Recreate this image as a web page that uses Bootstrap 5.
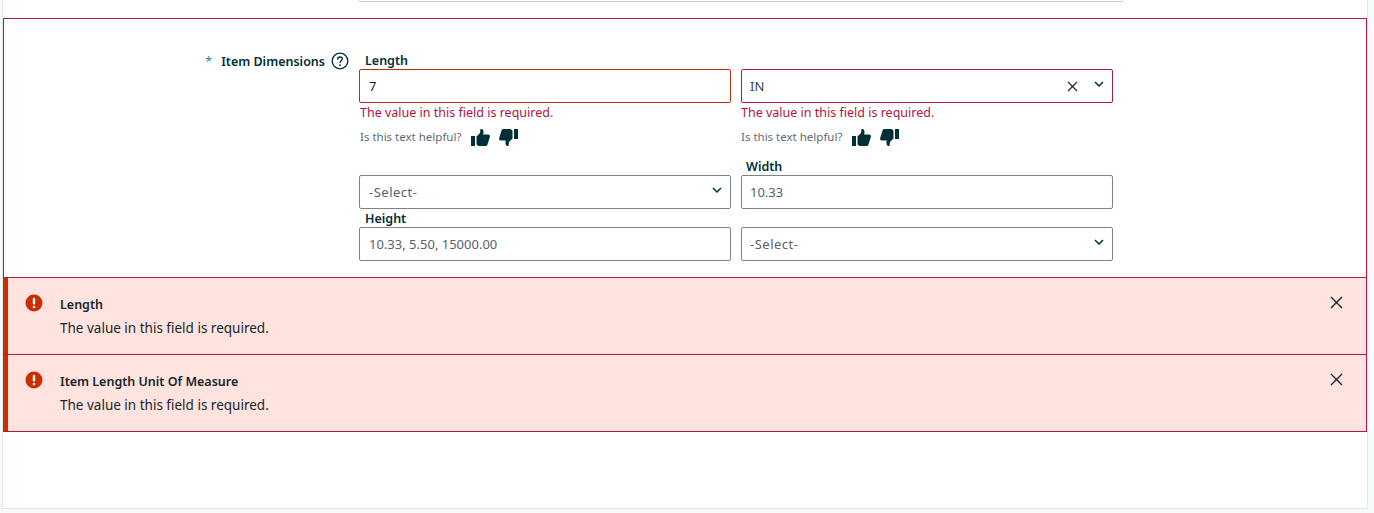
<!DOCTYPE html>
<html lang="en">
<head>
<meta charset="utf-8">
<title>Item Dimensions</title>
<link rel="stylesheet" href="https://cdn.jsdelivr.net/npm/bootstrap@5.3.0/dist/css/bootstrap.min.css">
<style>
html,body{height:513px;overflow:hidden}
body{background:#f7fafa;font-family:"Noto Sans","Open Sans",sans-serif;color:#002f36;font-size:13px}
.frame{margin-left:2px;width:1366px;height:509px;background:#fff;border:1px solid #e3e6e6;border-top:0}
.top-stub{margin-left:356px;width:764px;height:2px;border:1px solid #c9cccc;border-top:0;border-radius:0 0 2px 2px}
.err-section{margin-top:16px;border:1px solid #ad1a46;height:260px;padding-top:34px}
.field-row{display:flex}
.label-col{width:355px;flex:none;display:flex;justify-content:flex-end;align-items:flex-start;gap:6px;padding-right:10px;font-weight:600;font-size:12.5px;line-height:16px}
.label-col .req,.label-col .lbl-text{margin-top:1px}
.label-col .req{color:#1b8a9a;margin-right:3px;font-weight:400}
.inputs-col{width:754px;flex:none;display:grid;grid-template-columns:372px 372px;column-gap:10px;row-gap:2px}
.fld-label{display:block;font-weight:600;font-size:12.5px;line-height:16px;padding-left:6px;margin:0;height:16px}
.second .fld-label{padding-left:5px}
.fld{height:34px;border:1px solid #7b8585;border-radius:2px;font-size:13px;padding:0 9px;color:#56636a;background:#fff;display:flex;align-items:center;width:100%;line-height:1}
.second .fld{padding-left:8px}
.fld:focus{box-shadow:none}
.fld.dark{color:#16191f}
.fld.bad-o{border-color:#b62f10}
.fld.bad-c{border-color:#ad1a46;color:#3a464c}
.fld.placeholder-like{letter-spacing:.5px}
.fld .tools{margin-left:auto;display:flex;align-items:center;gap:16px;margin-right:-1px}
.err-msg{color:#b0153f;font-size:12.5px;line-height:16px;margin-top:2px;padding-left:1px}
.second .err-msg,.second .helpful{padding-left:0}
.helpful{display:flex;align-items:center;font-size:11.5px;color:#5f6b73;height:18px;margin-top:7px;margin-bottom:11px;padding-left:1px}
.helpful svg{display:block}
.thumb-up{margin-left:10px}
.thumb-down{margin-left:9px}
.alert-row{height:77px;background:#ffe3de;border:1px solid #ad1a46;border-top:0;border-left:5px solid #cc2c00;display:flex;font-size:13.5px;color:#16262c}
.alert-row .ico{margin:16px 0 0 17px;width:18px;height:18px;flex:none}
.alert-row .txt{margin-left:17px;padding-top:18px}
.alert-title{font-weight:600;font-size:12.5px;line-height:18px;margin-bottom:5px}
.alert-body{line-height:18px}
.alert-row .cls{margin:18px 23px 0 auto;flex:none}
</style>
</head>
<body>
<div class="frame">
  <div class="top-stub"></div>
  <div class="err-section">
    <div class="field-row">
      <div class="label-col">
        <span class="req">*</span><span class="lbl-text">Item Dimensions</span>
        <svg width="18" height="18" viewBox="0 0 18 18" fill="none" stroke="#002f36" stroke-width="1.3" style="margin-top:-1px"><circle cx="9" cy="9" r="7.8"/><path d="M6.7 7.2c0-1.4 1-2.2 2.3-2.2s2.3.9 2.3 2c0 1.700-2.300 1.800-2.300 3.600" stroke-linecap="round"/><circle cx="9" cy="13.200" r=".9" fill="#002f36" stroke="none"/></svg>
      </div>
      <div class="inputs-col">
        <div>
          <label class="fld-label">Length</label>
          <input class="fld dark bad-o form-control" value="7">
          <div class="err-msg">The value in this field is required.</div>
          <div class="helpful">Is this text helpful?
            <svg class="thumb-up" width="19" height="17" viewBox="0 0 19 17" fill="#002f36"><rect x="0" y="7" width="4" height="10"/><path d="M5.500 7.500 9 4 9.500 0c2.700-.3 3.600 1.700 2.700 5.500h4.800c1.600 0 2.300 1.200 1.800 2.600L16.500 15.500c-.4 1-1.100 1.500-2.200 1.500H8.500c-1.200 0-2.100-.7-3-1.500z"/></svg>
            <svg class="thumb-down" width="19" height="17" viewBox="0 0 19 17" fill="#002f36"><g transform="rotate(180 9.500 8.500)"><rect x="0" y="7" width="4" height="10"/><path d="M5.500 7.500 9 4 9.500 0c2.700-.3 3.600 1.700 2.700 5.500h4.800c1.600 0 2.300 1.200 1.800 2.600L16.500 15.500c-.4 1-1.100 1.500-2.200 1.500H8.500c-1.200 0-2.100-.7-3-1.500z"/></g></svg>
          </div>
        </div>
        <div class="second">
          <div class="fld-label"></div>
          <div class="fld bad-c">IN
            <span class="tools">
              <svg width="11" height="11" viewBox="0 0 11 11" stroke="#232f3e" stroke-width="1.300" fill="none"><path d="M1 1l9 9M10 1l-9 9"/></svg>
              <svg width="10" height="7" viewBox="0 0 10 7" stroke="#002f36" stroke-width="1.500" fill="none" style="margin-top:-3px"><path d="M1 1l4 4 4-4"/></svg>
            </span>
          </div>
          <div class="err-msg">The value in this field is required.</div>
          <div class="helpful">Is this text helpful?
            <svg class="thumb-up" width="19" height="17" viewBox="0 0 19 17" fill="#002f36"><rect x="0" y="7" width="4" height="10"/><path d="M5.500 7.500 9 4 9.500 0c2.700-.3 3.600 1.700 2.700 5.500h4.800c1.600 0 2.300 1.200 1.800 2.600L16.500 15.500c-.4 1-1.100 1.500-2.200 1.500H8.500c-1.200 0-2.100-.7-3-1.500z"/></svg>
            <svg class="thumb-down" width="19" height="17" viewBox="0 0 19 17" fill="#002f36"><g transform="rotate(180 9.500 8.500)"><rect x="0" y="7" width="4" height="10"/><path d="M5.500 7.500 9 4 9.500 0c2.700-.3 3.600 1.700 2.700 5.500h4.800c1.600 0 2.300 1.200 1.800 2.600L16.500 15.500c-.4 1-1.100 1.500-2.200 1.500H8.500c-1.200 0-2.100-.7-3-1.500z"/></g></svg>
          </div>
        </div>
        <div>
          <div class="fld-label"></div>
          <div class="fld placeholder-like">-Select-
            <span class="tools"><svg width="10" height="7" viewBox="0 0 10 7" stroke="#002f36" stroke-width="1.500" fill="none" style="margin-top:-3px"><path d="M1 1l4 4 4-4"/></svg></span>
          </div>
        </div>
        <div class="second">
          <label class="fld-label">Width</label>
          <input class="fld form-control" value="10.33">
        </div>
        <div>
          <label class="fld-label">Height</label>
          <input class="fld form-control" value="10.33, 5.50, 15000.00">
        </div>
        <div class="second">
          <div class="fld-label"></div>
          <div class="fld placeholder-like">-Select-
            <span class="tools"><svg width="10" height="7" viewBox="0 0 10 7" stroke="#002f36" stroke-width="1.500" fill="none" style="margin-top:-3px"><path d="M1 1l4 4 4-4"/></svg></span>
          </div>
        </div>
      </div>
    </div>
  </div>
  <div class="alert-row">
    <svg class="ico" viewBox="0 0 18 18"><circle cx="9" cy="9" r="8.500" fill="#cc2c00"/><rect x="7.800" y="3.800" width="2.400" height="6.800" rx="1.100" fill="#fff"/><circle cx="9" cy="13" r="1.300" fill="#fff"/></svg>
    <div class="txt"><div class="alert-title">Length</div><div class="alert-body">The value in this field is required.</div></div>
    <svg class="cls" width="13" height="13" viewBox="0 0 13 13" stroke="#16262c" stroke-width="1.400" fill="none"><path d="M1 1l11 11M12 1L1 12"/></svg>
  </div>
  <div class="alert-row">
    <svg class="ico" viewBox="0 0 18 18"><circle cx="9" cy="9" r="8.500" fill="#cc2c00"/><rect x="7.800" y="3.800" width="2.400" height="6.800" rx="1.100" fill="#fff"/><circle cx="9" cy="13" r="1.300" fill="#fff"/></svg>
    <div class="txt"><div class="alert-title">Item Length Unit Of Measure</div><div class="alert-body">The value in this field is required.</div></div>
    <svg class="cls" width="13" height="13" viewBox="0 0 13 13" stroke="#16262c" stroke-width="1.400" fill="none"><path d="M1 1l11 11M12 1L1 12"/></svg>
  </div>
</div>
<script src="https://cdn.jsdelivr.net/npm/bootstrap@5.3.0/dist/js/bootstrap.bundle.min.js"></script>
</body>
</html>
